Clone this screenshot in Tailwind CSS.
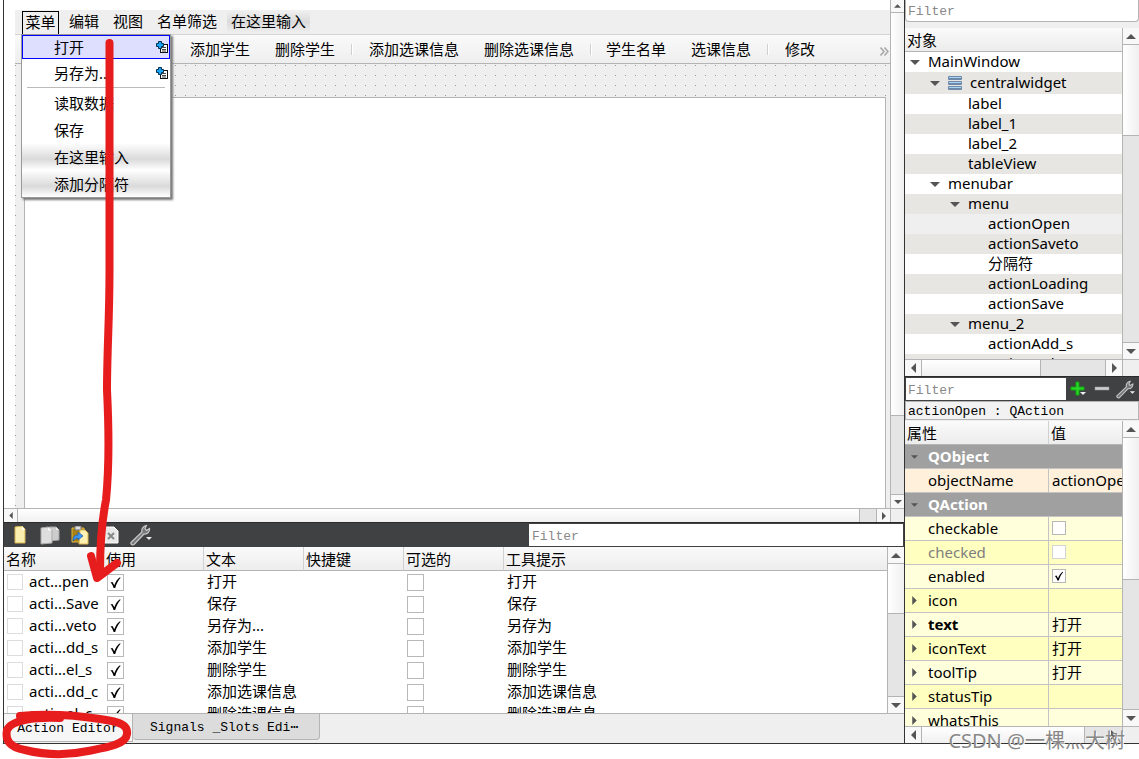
<!DOCTYPE html>
<html lang="zh-CN">
<head>
<meta charset="utf-8">
<title>Form Designer</title>
<script src="https://cdn.jsdelivr.net/npm/@tailwindcss/browser@4"></script>
</head>
<body class="relative h-screen overflow-hidden bg-white font-['Noto_Sans','Noto_Sans_CJK_SC',sans-serif] text-[15px] leading-5 text-black">
<svg class="hidden">
  <symbol id="up" viewBox="0 0 10 5"><path d="M0 5L5 0L10 5Z" fill="#555"/></symbol>
  <symbol id="down" viewBox="0 0 10 5"><path d="M0 0H10L5 5Z" fill="#555"/></symbol>
  <symbol id="left" viewBox="0 0 5 10"><path d="M5 0V10L0 5Z" fill="#555"/></symbol>
  <symbol id="right" viewBox="0 0 5 10"><path d="M0 0V10L5 5Z" fill="#555"/></symbol>
  <symbol id="tick" viewBox="0 0 17 17"><path d="M3.5 8.5L5.500 8L7.300 11.200C8.700 7.500 10.300 5.200 13 3.200L13.600 3.800C11 6.800 9.400 9.800 8.200 14H6.600C5.800 11.600 5 9.900 3.500 8.500Z" fill="#000"/></symbol>
  <symbol id="shortcut" viewBox="0 0 12 12"><rect x="4.500" y="3.500" width="7" height="8" fill="#fff" stroke="#111"/><path d="M6 6.500H10M6 8.500H10M6 10H10" stroke="#444"/><path d="M2.500 .5H5.500V2.500H7.500V5.500H5.500V7.500H2.500V5.500H.5V2.500H2.500Z" fill="#19a5f5" stroke="#00304f"/></symbol>
  <symbol id="wrench" viewBox="0 0 22 22"><path d="M1 18.500L12 8C11.300 5 13 2 16.500 1.500L15 4.500L16.500 6.500L19.500 4.500C20 8 17 10.500 14 10L4 20.500C2.500 21.500 .3 20 1 18.500Z" fill="#777" stroke="#c9c9c9" stroke-width="1.200"/><path d="M16 13H22L19 16Z" fill="#eee"/></symbol>
</svg>

<div class="flex h-full flex-col pb-[15px] pl-[3px]">
<div class="flex min-h-0 flex-1 border-b border-l border-[#333]">

  <main class="flex min-w-0 flex-1 flex-col">
    <section class="flex min-h-0 flex-1 flex-col">
      <div class="flex min-h-0 flex-1">
        <div class="relative flex min-w-0 flex-1 flex-col pl-[11px] pt-[10px]">
          <nav class="flex h-[25px] items-stretch border-b border-[#d4d4d4] bg-[#efefef] pl-[7px]">
            <button class="mt-px w-[37px] border border-b-0 border-black pb-[3px]">菜单</button>
            <button class="ml-[10px] pb-[2px]">编辑</button>
            <button class="ml-[14px] pb-[2px]">视图</button>
            <button class="ml-[14px] pb-[2px]">名单筛选</button>
            <button class="my-px ml-[10px] bg-linear-to-b from-[#efefef] via-[#dadada] to-[#efefef] px-1 pb-[2px]">在这里输入</button>
          </nav>
          <div class="flex h-[29px] items-center border-b border-[#b4b4b4] bg-linear-to-b from-[#fafafa] to-[#eeeeee] pl-[175px]">
            <button class="pb-px">添加学生</button>
            <button class="ml-[25px] pb-px">删除学生</button>
            <span class="ml-4 h-[11px] w-[2px] border-l border-[#d0d0d0] bg-white"></span>
            <button class="ml-4 pb-px">添加选课信息</button>
            <button class="ml-[25px] pb-px">删除选课信息</button>
            <span class="ml-4 h-[11px] w-[2px] border-l border-[#d0d0d0] bg-white"></span>
            <button class="ml-[14px] pb-px">学生名单</button>
            <button class="ml-[25px] pb-px">选课信息</button>
            <span class="ml-4 h-[11px] w-[2px] border-l border-[#d0d0d0] bg-white"></span>
            <button class="ml-4 pb-px">修改</button>
            <button aria-label="More" class="ml-auto"><svg class="mr-px mt-1 h-[9px] w-[9px]" viewBox="0 0 9 9"><path d="M.5 .5L4 4.500L.5 8.500M4.500 .5L8 4.500L4.500 8.500" fill="none" stroke="#aaa" stroke-width="1.600"/></svg></button>
          </div>
          <div class="flex min-h-0 flex-1 bg-[#efefef] bg-[conic-gradient(from_270deg_at_1px_1px,#999_90deg,#efefef_0)] bg-[size:10px_10px] bg-[position:0_1px] pl-[9px] pr-1 pt-[33px]">
            <div class="flex-1 border border-b-0 border-[#b4b4b4] bg-white"></div>
          </div>

          <div class="absolute left-[17px] top-[34px] w-[150px] border border-[#999] bg-white shadow-[2px_2px_2px_#777]">
            <button class="flex h-6 w-[148px] items-center border border-[#00f] bg-[#dedeff] pl-[31px] pb-px">打开<svg class="ml-auto mr-px h-3 w-3"><use href="#shortcut"/></svg></button>
            <button class="flex h-7 w-[148px] items-center pl-8">另存为...<svg class="ml-auto mr-[2px] h-3 w-3"><use href="#shortcut"/></svg></button>
            <hr class="mx-[5px] mb-px border-[#bbb]">
            <button class="block h-[27px] w-full pl-8 text-left">读取数据</button>
            <button class="block h-[27px] w-full pl-8 text-left">保存</button>
            <button class="block h-[27px] w-full bg-linear-to-b from-white via-[#dadada] via-60% to-white pl-8 text-left">在这里输入</button>
            <button class="block h-[27px] w-full bg-linear-to-b from-white via-[#dadada] via-60% to-white pl-8 text-left">添加分隔符</button>
          </div>
        </div>
        <div class="flex w-[14px] flex-col border-l border-[#b4b4b4] bg-[#e5e5e5]">
          <button aria-label="Up" class="flex h-[13px] items-center justify-center border-b border-[#b4b4b4] bg-[#f8f8f8]"><svg class="h-1 w-[7px]"><use href="#up"/></svg></button>
          <div class="h-[403px] border-b border-[#b4b4b4] bg-linear-to-r from-white to-[#f0f0f0]"></div>
          <button aria-label="Down" class="mt-auto flex h-[14px] items-center justify-center border-t border-[#b4b4b4] bg-[#f8f8f8]"><svg class="h-1 w-2"><use href="#down"/></svg></button>
        </div>
      </div>
      <div class="flex h-[14px] border-t border-[#b4b4b4] bg-[#e5e5e5]">
        <button aria-label="Left" class="flex w-[14px] items-center justify-center border-r border-[#b4b4b4] bg-[#f8f8f8]"><svg class="h-[7px] w-1"><use href="#left"/></svg></button>
        <div class="mr-4 flex-1 border-r border-[#b4b4b4] bg-linear-to-b from-white to-[#f0f0f0]"></div>
        <button aria-label="Right" class="flex w-[14px] items-center justify-center border-l border-[#b4b4b4] bg-[#f8f8f8]"><svg class="h-2 w-1"><use href="#right"/></svg></button>
        <div class="w-[14px] border-l border-[#b4b4b4] bg-[#efefef]"></div>
      </div>
    </section>

    <section class="flex h-[221px] flex-col">
      <div class="flex h-[25px] items-center border-t border-[#2b2b2b] bg-[#404142] py-px pr-px">
        <button aria-label="New" class="ml-[10px]"><svg class="h-[18px] w-[12px]" viewBox="0 0 12 18"><path d="M1 1L8 0L11 3V17H1Z" fill="#fbefb0" stroke="#d7b653"/><path d="M8 0V4H11Z" fill="#fff"/></svg></button>
        <button aria-label="Copy" class="ml-[14px]"><svg class="h-[19px] w-5" viewBox="0 0 20 19"><path d="M9 1H16L19 4V14L9 15Z" fill="#ccc" stroke="#a4a4a4"/><path d="M16 1V4H19Z" fill="#eee"/><path d="M1 2L8 1L12 4V17L1 18Z" fill="#dedede" stroke="#aaa"/><path d="M8 1V5L12 4Z" fill="#f4f4f4"/></svg></button>
        <button aria-label="Paste" class="ml-[11px]"><svg class="h-[19px] w-[18px]" viewBox="0 0 18 19"><path d="M1 2H13V16H1Z" fill="#a98016" stroke="#e0b93c"/><path d="M4 0H10V4H4Z" fill="#ddd" stroke="#777"/><path d="M9 4H14L17 7V18H8Z" fill="#fff0b4" stroke="#dcb650"/><path d="M2 15C2 10 4 9 7 9V6L12 10L7 14V12C5 12 4 13 2 15Z" fill="#3c96f0" stroke="#1757b0" stroke-width=".7"/></svg></button>
        <button aria-label="Delete" class="ml-[14px]"><svg class="h-[18px] w-4" viewBox="0 0 16 18"><path d="M1 1H11L15 5V17H1Z" fill="#e8e8e8" stroke="#fff"/><path d="M5 7L11 13M11 7L5 13" stroke="#888" stroke-width="2"/></svg></button>
        <button aria-label="Configure" class="ml-[11px]"><svg class="h-[22px] w-[22px]"><use href="#wrench"/></svg></button>
        <input aria-label="Filter actions" placeholder="Filter" class="ml-auto h-[22px] w-[374px] bg-white px-[3px] pt-[2px] font-['Liberation_Mono',monospace] text-[13px] placeholder:text-[#888]">
      </div>
      <div class="flex min-h-0 flex-1">
        <div class="min-w-0 flex-1 overflow-hidden">
          <table class="w-full table-fixed border-separate border-spacing-0 text-left">
            <colgroup><col class="w-[100px]"><col class="w-[100px]"><col class="w-[100px]"><col class="w-[100px]"><col class="w-[100px]"><col></colgroup>
            <thead class="bg-linear-to-b from-[#fafafa] to-[#ececec]">
              <tr>
                <th class="h-6 border-b border-r border-[#b4b4b4] border-r-[#d0d0d0] p-0 pl-[2px] font-normal">名称</th>
                <th class="border-b border-r border-[#b4b4b4] border-r-[#d0d0d0] p-0 pl-[2px] font-normal">使用</th>
                <th class="border-b border-r border-[#b4b4b4] border-r-[#d0d0d0] p-0 pl-[2px] font-normal">文本</th>
                <th class="border-b border-r border-[#b4b4b4] border-r-[#d0d0d0] p-0 pl-[2px] font-normal">快捷键</th>
                <th class="border-b border-r border-[#b4b4b4] border-r-[#d0d0d0] p-0 pl-[2px] font-normal">可选的</th>
                <th class="border-b border-[#b4b4b4] p-0 pl-[2px] font-normal">工具提示</th>
              </tr>
            </thead>
            <tbody id="actions"></tbody>
          </table>
        </div>
        <div class="flex w-[17px] flex-col border-l border-[#b4b4b4] bg-[#e5e5e5]">
          <button aria-label="Up" class="flex h-[17px] items-center justify-center border-b border-[#b4b4b4] bg-[#f8f8f8]"><svg class="h-[5px] w-[10px]"><use href="#up"/></svg></button>
          <div class="h-[50px] border-b border-[#b4b4b4] bg-linear-to-r from-white to-[#f0f0f0]"></div>
          <button aria-label="Down" class="mt-auto flex h-[17px] items-center justify-center border-t border-[#b4b4b4] bg-[#f8f8f8]"><svg class="h-[5px] w-[10px]"><use href="#down"/></svg></button>
        </div>
      </div>
      <div class="flex h-[30px] items-start border-t border-[#b4b4b4] bg-[#efefef] font-['Liberation_Mono',monospace] text-[13px]">
        <button class="h-7 w-[129px] border-b border-r border-[#b4b4b4] bg-[#f6f6f6] pt-[3px]">Action Editor</button>
        <button class="h-[26px] w-[187px] rounded-b-sm border border-t-0 border-l-0 border-[#b4b4b4] bg-[#dcdcdc] pl-[17px] pt-[2px] text-left">Signals _Slots Edi⋯</button>
      </div>
    </section>
  </main>

  <aside class="flex w-[235px] flex-col border-l border-[#333] bg-[#efefef]">
    <div class="pb-[6px]">
      <input aria-label="Filter objects" placeholder="Filter" class="block h-[22px] w-full rounded-b-sm border border-t-0 border-[#b4b4b4] bg-white px-[2px] pt-[2px] font-['Liberation_Mono',monospace] text-[13px] placeholder:text-[#888]">
    </div>
    <div class="flex h-[331px]">
      <div class="min-w-0 flex-1 overflow-hidden bg-white">
        <div class="flex h-6 items-center border-b border-[#b4b4b4] bg-linear-to-b from-[#fafafa] to-[#ececec] pl-[2px]">对象</div>
        <ul id="tree"></ul>
      </div>
      <div class="flex w-[17px] flex-col border-l border-[#b4b4b4] bg-[#e5e5e5]">
        <button aria-label="Up" class="flex h-[17px] items-center justify-center border-b border-[#b4b4b4] bg-[#f8f8f8]"><svg class="h-[5px] w-[10px]"><use href="#up"/></svg></button>
        <div class="h-[91px] border-b border-[#b4b4b4] bg-linear-to-r from-white to-[#f0f0f0]"></div>
        <button aria-label="Down" class="mt-auto flex h-[17px] items-center justify-center border-t border-[#b4b4b4] bg-[#f8f8f8]"><svg class="h-[5px] w-[10px]"><use href="#down"/></svg></button>
      </div>
    </div>
    <div class="flex h-[17px] border-t border-[#b4b4b4] bg-[#e5e5e5]">
      <button aria-label="Left" class="flex w-[17px] items-center justify-center border-r border-[#b4b4b4] bg-[#f8f8f8]"><svg class="h-[10px] w-[5px]"><use href="#left"/></svg></button>
      <div class="w-[119px] border-r border-[#b4b4b4] bg-linear-to-b from-white to-[#f0f0f0]"></div>
      <button aria-label="Right" class="ml-auto flex w-[17px] items-center justify-center border-l border-[#b4b4b4] bg-[#f8f8f8]"><svg class="h-[10px] w-[5px]"><use href="#right"/></svg></button>
      <div class="w-[17px] border-l border-[#b4b4b4] bg-[#efefef]"></div>
    </div>
    <div class="flex h-[25px] items-center border-t border-[#2b2b2b] bg-[#404142] pl-px">
      <input aria-label="Filter properties" placeholder="Filter" class="h-[22px] min-w-0 flex-1 bg-white px-[2px] pt-[2px] font-['Liberation_Mono',monospace] text-[13px] placeholder:text-[#888]">
      <button aria-label="Add" class="ml-1"><svg class="h-4 w-4" viewBox="0 0 16 16"><path d="M6 1H9V6H14V9H9V14H6V9H1V6H6Z" fill="#2bd42b" stroke="#0fa80f"/><path d="M10 11H16L13 14Z" fill="#eee"/></svg></button>
      <button aria-label="Remove" class="ml-2"><svg class="h-4 w-4" viewBox="0 0 16 16"><path d="M1 6H15V9H1Z" fill="#ccc" stroke="#999" stroke-width=".5"/></svg></button>
      <button aria-label="Configure" class="ml-[6px] mr-1"><svg class="h-[19px] w-[19px]"><use href="#wrench"/></svg></button>
    </div>
    <div class="mb-px h-[19px] border border-[#b4b4b4] bg-[#f2f2f2] pl-[2px] font-['Liberation_Mono',monospace] text-[13px] leading-[19px]">actionOpen : QAction</div>
    <div class="flex min-h-0 flex-1">
      <div class="min-w-0 flex-1 overflow-hidden bg-white">
        <table class="w-full table-fixed border-separate border-spacing-0 text-left">
          <colgroup><col class="w-[144px]"><col></colgroup>
          <thead class="bg-linear-to-b from-[#fafafa] to-[#ececec]">
            <tr><th class="h-6 border-b border-r border-[#b4b4b4] border-r-[#d0d0d0] p-0 pl-[2px] font-normal">属性</th><th class="border-b border-[#b4b4b4] p-0 pl-[2px] font-normal">值</th></tr>
          </thead>
          <tbody id="props"></tbody>
        </table>
      </div>
      <div class="flex w-[17px] flex-col border-l border-[#b4b4b4] bg-[#e5e5e5]">
        <button aria-label="Up" class="flex h-[17px] items-center justify-center border-b border-[#b4b4b4] bg-[#f8f8f8]"><svg class="h-[5px] w-[10px]"><use href="#up"/></svg></button>
        <div class="h-[142px] border-b border-[#b4b4b4] bg-linear-to-r from-white to-[#f0f0f0]"></div>
        <button aria-label="Down" class="mt-auto flex h-[17px] items-center justify-center border-t border-[#b4b4b4] bg-[#f8f8f8]"><svg class="h-[5px] w-[10px]"><use href="#down"/></svg></button>
      </div>
    </div>
    <div class="flex h-[17px] border-t border-[#b4b4b4] bg-[#e5e5e5]">
      <button aria-label="Left" class="flex w-[17px] items-center justify-center border-r border-[#b4b4b4] bg-[#f8f8f8]"><svg class="h-[10px] w-[5px]"><use href="#left"/></svg></button>
      <div class="mr-5 flex-1 border-r border-[#b4b4b4] bg-linear-to-b from-white to-[#f0f0f0]"></div>
      <button aria-label="Right" class="flex w-[17px] items-center justify-center bg-[#e5e5e5]"><svg class="h-[10px] w-[5px]"><use href="#right"/></svg></button>
      <div class="w-[17px] border-l border-[#b4b4b4] bg-[#efefef]"></div>
    </div>
  </aside>
</div>
</div>

<!-- hand-drawn marker strokes -->
<svg class="pointer-events-none absolute left-0 top-0 h-full w-full" fill="none" stroke="#e71d1d" stroke-linecap="round" stroke-linejoin="round">
  <path d="M109.500 43V270C109.500 320 107 350 107 390C109 430 109 470 106 500C102 520 100 545 100 572" stroke-width="8"/>
  <path d="M91 556L97 578L117 563" stroke-width="8"/>
  <path d="M20 716C50 713 75 715 100 719C121 722 128 725 127 734C126 745 104 748 88 751C65 756 45 755 25 750C9 747 5 740 7 730C11 720 35 717 60 718" stroke-width="8"/>
</svg>
<div class="pointer-events-none absolute bottom-[6px] right-[14px] text-xl leading-6 text-[#888] [text-shadow:1px_1px_0_#fff]">CSDN @一棵灬大树</div>

<script>
const box = (label, checked) => `<span class="relative block h-[17px] w-[17px]"><input type="checkbox" aria-label="${label}" ${checked ? 'checked' : ''} class="peer block h-[17px] w-[17px] appearance-none border border-[#b8b8b8] bg-white"><svg class="pointer-events-none absolute inset-0 hidden h-[17px] w-[17px] peer-checked:block"><use href="#tick"/></svg></span>`;
const smallBox = (label, checked, off) => `<span class="relative block h-[14px] w-[14px]"><input type="checkbox" aria-label="${label}" ${checked ? 'checked' : ''} ${off ? 'disabled' : ''} class="peer block h-[14px] w-[14px] appearance-none border border-[#b8b8b8] bg-white disabled:border-[#d4d4d4]"><svg class="pointer-events-none absolute inset-0 hidden h-[14px] w-[14px] peer-checked:block"><use href="#tick"/></svg></span>`;

document.getElementById('actions').innerHTML = [
  ['act...pen', '打开', '打开'], ['acti...Save', '保存', '保存'], ['acti...veto', '另存为...', '另存为'],
  ['acti...dd_s', '添加学生', '添加学生'], ['acti...el_s', '删除学生', '删除学生'],
  ['acti...dd_c', '添加选课信息', '添加选课信息'], ['acti...el_c', '删除选课信息', '删除选课信息'],
].map(([n, t, tip]) => `<tr>
  <td class="h-[22px] p-0 pl-[3px]"><span class="flex items-center gap-[6px] whitespace-nowrap"><i class="h-4 w-4 border border-[#dcdcdc]"></i><span class="pb-[2px]">${n}</span></span></td>
  <td class="p-0 pl-[3px]">${box(n + ' 使用', true)}</td>
  <td class="whitespace-nowrap p-0 pb-[2px] pl-[3px]">${t}</td><td class="p-0"></td>
  <td class="p-0 pl-[3px]">${box(n + ' 可选的', false)}</td>
  <td class="whitespace-nowrap p-0 pb-[2px] pl-[3px]">${tip}</td></tr>`).join('');

const layers = '<svg class="mr-2 h-[14px] w-[14px]" viewBox="0 0 14 14"><rect width="14" height="4" rx="1" fill="#6d88a8"/><rect y="5" width="14" height="4" rx="1" fill="#6d88a8"/><rect y="10" width="14" height="4" rx="1" fill="#6d88a8"/><path d="M1 1.500H13M1 6.500H13M1 11.500H13" stroke="#a9d4f2"/></svg>';
const arrow = '<svg class="mr-2 h-[5px] w-[10px]"><use href="#down"/></svg>';
const pads = { m: 'pl-[5px]', c: 'pl-[25px]', l: 'pl-[63px]', d: 'pl-[45px]', a: 'pl-[83px]' };
document.getElementById('tree').innerHTML = [
  ['m', 'MainWindow'], ['c', 'centralwidget'], ['l', 'label'], ['l', 'label_1'], ['l', 'label_2'], ['l', 'tableView'],
  ['c', 'menubar'], ['d', 'menu'], ['a', 'actionOpen'], ['a', 'actionSaveto'], ['a', '分隔符'], ['a', 'actionLoading'],
  ['a', 'actionSave'], ['d', 'menu_2'], ['a', 'actionAdd_s'], ['a', 'actionDel_s'],
].map(([k, t], i) => `<li class="flex items-center ${t === 'centralwidget' ? 'h-[22px]' : 'h-5'} ${t === 'actionOpen' ? 'bg-[#efefef]' : i % 2 ? 'bg-[#e7e6e2]' : 'bg-white'} ${pads[k]}">${'mcd'.includes(k) ? arrow : ''}${t === 'centralwidget' ? layers : ''}<span class="pb-[2px]">${t}</span></li>`).join('');

const group = t => `<tr class="bg-[#a0a0a0] font-bold text-white"><td colspan="2" class="h-6 border-b border-[#c4c4c4] p-0 pl-[6px]"><span class="flex items-center"><svg class="mr-[10px] h-1 w-[7px]"><use href="#down"/></svg><span class="pb-[2px]">${t}</span></span></td></tr>`;
const row = (bg, name, value, open, style) => `<tr class="${bg}"><td class="h-6 border-b border-r border-[#c4c4c4] p-0 pl-[7px]"><span class="flex items-center ${style || ''}"><svg class="mr-[11px] h-[9px] w-[5px] shrink-0">${open ? '<use href="#right"/>' : ''}</svg><span class="pb-[2px]">${name}</span></span></td><td class="whitespace-nowrap border-b border-[#c4c4c4] p-0 pb-px pl-[3px]">${value}</td></tr>`;
const A = 'bg-[#ffffdc]', B = 'bg-[#ffffbf]';
document.getElementById('props').innerHTML = group('QObject') + row('bg-[#fff0dc]', 'objectName', 'actionOpen') + group('QAction')
  + row(A, 'checkable', smallBox('checkable')) + row(B, 'checked', smallBox('checked', false, true), false, 'text-[#808080]')
  + row(A, 'enabled', smallBox('enabled', true)) + row(B, 'icon', '', true) + row(A, 'text', '打开', true, 'font-bold')
  + row(B, 'iconText', '打开', true) + row(A, 'toolTip', '打开', true) + row(B, 'statusTip', '', true) + row(A, 'whatsThis', '', true);
</script>
</body>
</html>
